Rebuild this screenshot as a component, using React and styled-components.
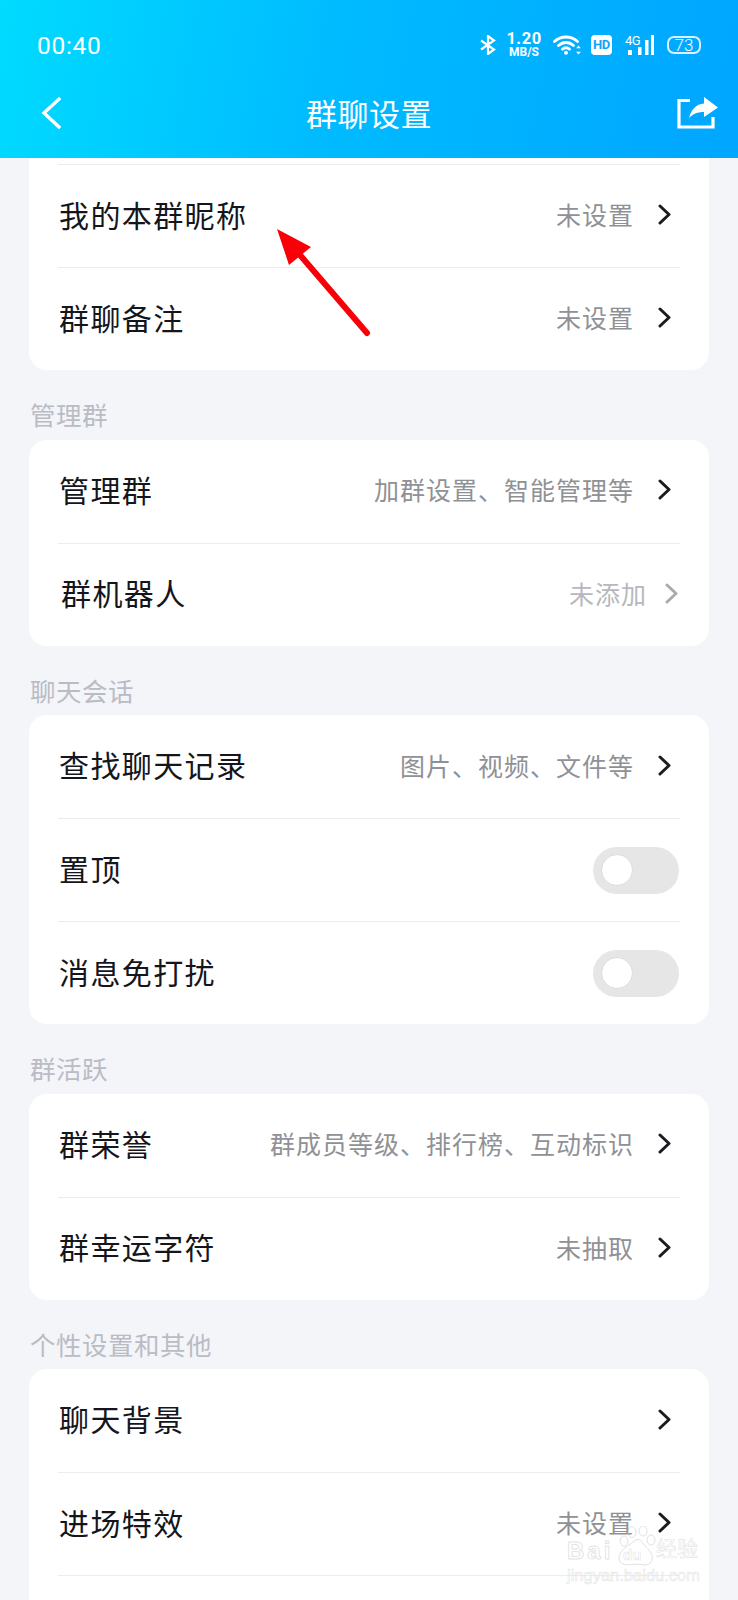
import React from "react";
import styled, { createGlobalStyle } from "styled-components";

const Global = createGlobalStyle`
  html, body { margin: 0; padding: 0; background: #f3f5f9; }
  body { font-family: "Noto Sans CJK SC", "Noto Sans", sans-serif; }
  * { box-sizing: border-box; }
`;
const Page = styled.div`
  position: relative; width: 738px; height: 1600px; overflow: hidden;
  background: #f3f5f9; display: flex; flex-direction: column;
`;
const Header = styled.header`
  height: 158px; flex: none; color: #fff; padding-top: 12px;
  background: linear-gradient(100deg, #00dbff 0%, #00bbff 45%, #00a6ff 100%);
`;
const StatusBar = styled.div`
  height: 66px; display: flex; align-items: center; justify-content: space-between;
  padding: 0 37px;
`;
const Time = styled.span`
  font-family: "Roboto", sans-serif; font-size: 24.5px; letter-spacing: .7px; font-weight: 400;
`;
const StatusIcons = styled.div`display: flex; align-items: center;`;
const Speed = styled.div`
  font-family: "Roboto", sans-serif; font-weight: 700; display: flex; flex-direction: column;
  align-items: center; margin: 0 13px 0 12px; width: 32px;
`;
const SpeedNum = styled.span`font-size: 16.5px; line-height: 14px; letter-spacing: .5px;`;
const SpeedUnit = styled.span`font-size: 12px; line-height: 12px;`;
const HdBadge = styled.span`
  width: 21px; height: 20px; border-radius: 4px; background: #fff; color: #0aa6fb;
  font: 700 13px/20px "Roboto", sans-serif; letter-spacing: -.3px; text-align: center; margin: 0 13px 0 10px;
`;
const Signal = styled.div`position: relative; width: 29px; height: 20px; margin-right: 13px;`;
const SignalLabel = styled.span`
  position: absolute; left: 0; top: -1px; font: 400 13px/13px "Roboto", sans-serif; letter-spacing: -.5px;
`;
const Battery = styled.span`
  width: 34px; height: 18px; border: 2px solid rgba(255,255,255,.85); border-radius: 7px;
  font: 300 17px/14px "Roboto", sans-serif; text-align: center;
`;
const Nav = styled.div`
  height: 70px; display: flex; align-items: center; justify-content: space-between;
  padding: 0 20px 0 41px; position: relative;
`;
const Title = styled.h1`
  position: absolute; left: 0; right: 0; text-align: center; margin: 0;
  font-size: 31px; font-weight: 400; line-height: 70px; letter-spacing: .5px;
`;
const Card = styled.section`
  flex: none; margin: 0 29px; background: #fff; border-radius: 18px;
  ${p => p.$clipped && "border-top-left-radius: 0; border-top-right-radius: 0; padding-top: 6px;"}
`;
const Row = styled.div`
  height: 103px; margin: 0 29px; display: flex; align-items: center; justify-content: space-between;
  border-top: ${p => p.$noLine ? "none" : "1px solid #ececee"};
`;
const Label = styled.span`
  font-size: 30px; color: #14161c; letter-spacing: 1.4px; line-height: 1; margin-bottom: 5px;
  margin-left: ${p => p.$nudge ? "3px" : "1px"};
`;
const Right = styled.div`
  display: flex; align-items: center; margin-bottom: 3px;
  padding-right: ${p => p.$shift ? "2px" : "9px"};
`;
const Value = styled.span`
  font-size: 25px; letter-spacing: 1px; line-height: 1;
  color: ${p => p.$muted ? "#b6b8bd" : "#8f9196"};
  margin-right: ${p => p.$shift ? "18px" : "24px"};
`;
const Section = styled.div`
  flex: none; height: 69.5px; padding: 24px 0 0 30px; font-size: 25.5px; line-height: 40px;
  letter-spacing: .5px; color: #babcc5;
`;
const Toggle = styled.div`
  width: 86px; height: 47px; border-radius: 24px; background: #e6e6e6; display: flex;
  align-items: center; padding-left: 8px; margin-right: 1px;
`;
const Knob = styled.div`
  width: 32px; height: 32px; border-radius: 50%; background: #fff; border: 1px solid #dcdcdc;
`;
const ArrowOverlay = styled.svg`position: absolute; left: 0; top: 0; pointer-events: none;`;
const Watermark = styled.div`
  position: absolute; left: 567px; top: 1526px; width: 135px; color: rgba(255,255,255,.55);
  -webkit-text-stroke: 1px rgba(205,205,205,.55); font-family: "Liberation Sans", sans-serif;
  display: flex; flex-direction: column; pointer-events: none;
`;
const WatermarkBrand = styled.div`display: flex; align-items: flex-end; height: 40px;`;
const WatermarkBai = styled.span`
  font-size: 24px; line-height: 18px; letter-spacing: 3px; margin-bottom: 6px; width: 51px; font-weight: 700;
`;
const WatermarkPaw = styled.div`position: relative; width: 38px; height: 40px; flex: none;`;
const WatermarkDu = styled.span`
  position: absolute; left: 5px; top: 22px; font-size: 15px; line-height: 14px; font-weight: 700;
  -webkit-text-stroke-width: .6px;
`;
const WatermarkCjk = styled.span`
  font-family: "Noto Sans CJK SC", sans-serif; font-size: 21px; line-height: 22px; margin-bottom: 8px;
  white-space: nowrap; -webkit-text-stroke-width: .6px;
`;
const WatermarkUrl = styled.div`
  font-size: 16.5px; line-height: 16px; margin-top: 1px; -webkit-text-stroke-width: .6px; white-space: nowrap;
`;

const Chevron = ({ muted }) => (
  <svg width="13" height="21" viewBox="0 0 13 21" fill="none" stroke={muted ? "#a9abb0" : "#1b1c20"} strokeWidth="3" strokeLinecap="round" strokeLinejoin="round">
    <path d="M2 2 L11 10.5 L2 19" />
  </svg>
);
const Item = ({ label, value, muted, noLine, nudge }) => (
  <Row $noLine={noLine}>
    <Label $nudge={nudge}>{label}</Label>
    <Right $shift={muted}>
      {value && <Value $muted={muted} $shift={muted}>{value}</Value>}
      <Chevron muted={muted} />
    </Right>
  </Row>
);
const Switch = ({ label }) => (
  <Row>
    <Label>{label}</Label>
    <Toggle><Knob /></Toggle>
  </Row>
);

export default function App() {
  return (
    <Page>
      <Global />
      <Header>
        <StatusBar>
          <Time>00:40</Time>
          <StatusIcons>
            <svg width="16" height="20" viewBox="0 0 16 20" fill="none" stroke="#fff" strokeWidth="2.2">
              <path d="M1 5.5 L14 14.5 L8 19 V1 L14 5.5 L1 14.5" />
            </svg>
            <Speed>
              <SpeedNum>1.20</SpeedNum>
              <SpeedUnit>MB/S</SpeedUnit>
            </Speed>
            <svg width="28" height="20" viewBox="0 0 28 20" fill="none" stroke="#fff" strokeWidth="2.8" strokeLinecap="round">
              <path d="M1.5 6.5 C8 0.5 18 0.5 24.5 6.5" />
              <path d="M5.5 10.5 C10 6.5 16 6.5 20.5 10.5" />
              <path d="M9.5 14.2 C11.5 12.6 14.5 12.6 16.5 14.2" />
              <circle cx="13" cy="17.8" r="2" fill="#fff" stroke="none" />
              <path d="M25.5 10.5 l-2.4 2.8 h4.8z M25.5 19.5 l-2.4 -2.8 h4.8z" fill="#fff" stroke="none" />
            </svg>
            <HdBadge>HD</HdBadge>
            <Signal>
              <SignalLabel>4G</SignalLabel>
              <svg width="29" height="20" viewBox="0 0 29 20" fill="#fff">
                <rect x="3" y="15" width="4" height="5" />
                <rect x="13" y="12" width="3.5" height="8" />
                <rect x="20" y="5" width="3.5" height="15" />
                <rect x="26" y="0" width="3" height="20" />
              </svg>
            </Signal>
            <Battery>73</Battery>
          </StatusIcons>
        </StatusBar>
        <Nav>
          <svg width="20" height="32" viewBox="0 0 20 32" fill="none" stroke="#fff" strokeWidth="3.4" strokeLinecap="square">
            <path d="M18 2 L3 16 L18 30" />
          </svg>
          <Title>群聊设置</Title>
          <svg width="41" height="32" viewBox="0 0 41 32" fill="none">
            <path d="M13 3.5 H2 V30 H36 V20" stroke="#fff" strokeWidth="3.2" />
            <path d="M27 0 L41 10.5 L27 20 V15 C20 15 16 17 12 21 C14 13 19 7 27 6.5 Z" fill="#fff" />
          </svg>
        </Nav>
      </Header>

      <Card $clipped>
        <Item label="我的本群昵称" value="未设置" />
        <Item label="群聊备注" value="未设置" />
      </Card>
      <Section>管理群</Section>
      <Card>
        <Item label="管理群" value="加群设置、智能管理等" noLine />
        <Item label="群机器人" value="未添加" muted nudge />
      </Card>
      <Section>聊天会话</Section>
      <Card>
        <Item label="查找聊天记录" value="图片、视频、文件等" noLine />
        <Switch label="置顶" />
        <Switch label="消息免打扰" />
      </Card>
      <Section>群活跃</Section>
      <Card>
        <Item label="群荣誉" value="群成员等级、排行榜、互动标识" noLine />
        <Item label="群幸运字符" value="未抽取" />
      </Card>
      <Section>个性设置和其他</Section>
      <Card>
        <Item label="聊天背景" noLine />
        <Item label="进场特效" value="未设置" />
        <Row />
      </Card>

      <ArrowOverlay width="738" height="1600" viewBox="0 0 738 1600">
        <path d="M277 229 L311 247 L289 265 Z" fill="#f90008" />
        <path d="M300 255 L367 333" stroke="#f90008" strokeWidth="6" strokeLinecap="round" />
      </ArrowOverlay>
      <Watermark>
        <WatermarkBrand>
          <WatermarkBai>Bai</WatermarkBai>
          <WatermarkPaw>
            <svg width="38" height="40" viewBox="0 0 38 40" fill="none" stroke="rgba(205,205,205,.6)" strokeWidth="1">
              <ellipse cx="6" cy="15" rx="4" ry="5" />
              <ellipse cx="14" cy="6" rx="4" ry="5.5" />
              <ellipse cx="25" cy="5" rx="4" ry="5" />
              <ellipse cx="33" cy="14" rx="4" ry="5" />
              <path d="M15 16 C9 21 1 24 1 32 C1 38 7 39.5 14 38.5 C18 38 22 38 26 39 C31 39.5 35 36 34 30 C33 24 27 21 24 16 C21 12 18 13 15 16 Z" />
            </svg>
            <WatermarkDu>du</WatermarkDu>
          </WatermarkPaw>
          <WatermarkCjk>经验</WatermarkCjk>
        </WatermarkBrand>
        <WatermarkUrl>jingyan.baidu.com</WatermarkUrl>
      </Watermark>
    </Page>
  );
}
